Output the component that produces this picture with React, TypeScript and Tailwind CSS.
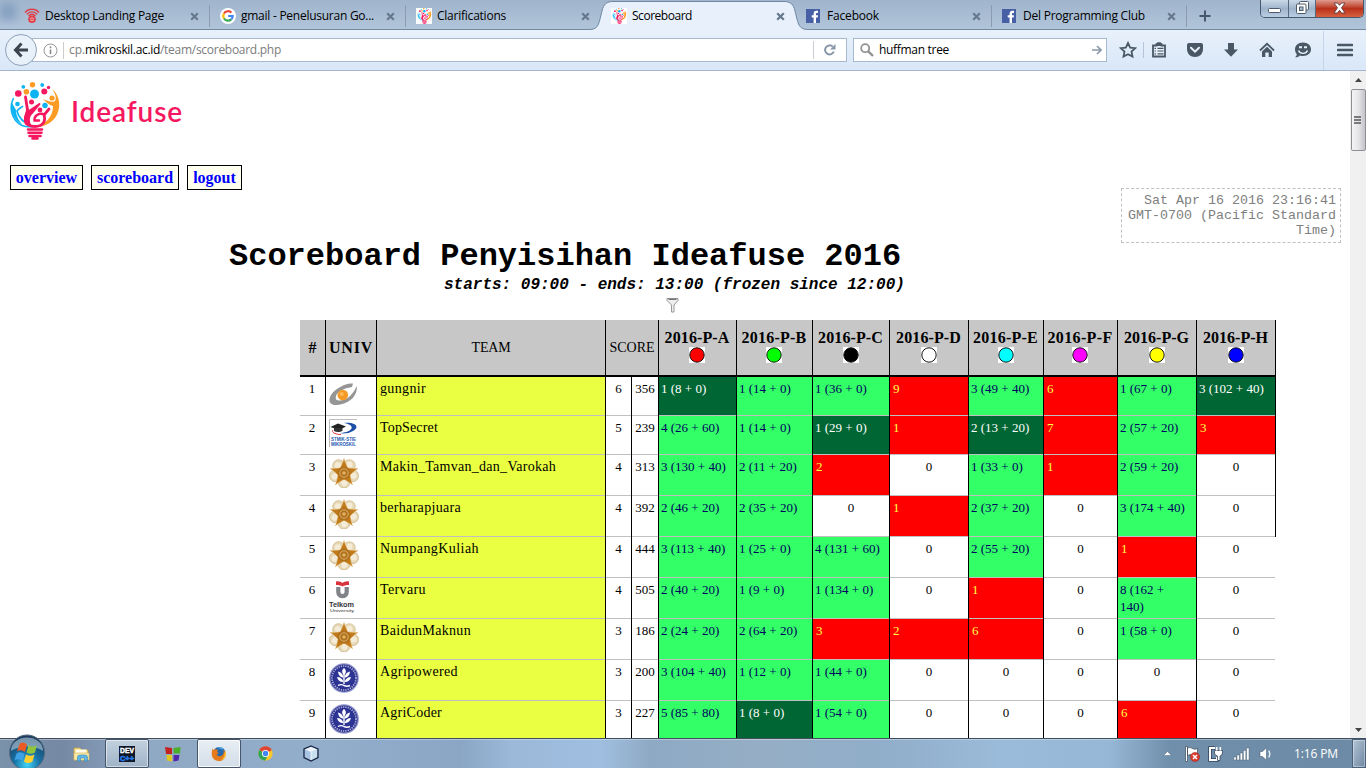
import React, { useLayoutEffect, useRef, useState } from "react";

const UI = "font-['Open_Sans','Noto_Sans',sans-serif]";

/** Spreads the letters of a label over a fixed width. */
function Fit({ w, children, className = "" }: { w: number; children: string; className?: string }) {
  const ref = useRef<HTMLSpanElement>(null);
  const [gap, setGap] = useState(0);
  useLayoutEffect(() => {
    if (ref.current) setGap((w - ref.current.getBoundingClientRect().width) / children.length);
  }, [w, children]);
  return (
    <span ref={ref} className={`inline-block shrink-0 whitespace-pre ${className}`} style={{ letterSpacing: gap }}>
      {children}
    </span>
  );
}

/* ---------- browser tabs ---------- */

const BulbArt = () => (
  <g fill="none">
    <g fill="#f5175f">
      <circle cx="8.300" cy="11.500" r="3.300" />
      <circle cx="34.300" cy="9.500" r="3" />
      <circle cx="38.500" cy="5.500" r="1.700" />
      <circle cx="21.500" cy="20" r="2.500" />
      <circle cx="30" cy="28" r="2.400" />
    </g>
    <g fill="#fb9b23">
      <circle cx="22.500" cy="2.800" r="2.700" />
      <circle cx="16.400" cy="9.800" r="2.800" />
      <circle cx="42" cy="16" r="2.600" />
    </g>
    <g fill="#0eb4f2">
      <circle cx="13.300" cy="4.800" r="1.900" />
      <circle cx="32.200" cy="3" r="1.900" />
      <circle cx="24.500" cy="12" r="4.500" />
      <circle cx="7.500" cy="22" r="2.300" />
      <circle cx="35" cy="23.500" r="2.700" />
    </g>
    <path d="M3.500 16C-1 25 1 38 12 43.500C16 45 20 45 23 44.500C11 40 8 34 7 29C9 26 11 26 13 24" stroke="#0eb4f2" strokeWidth="1.600" />
    <path d="M2 21C0 30 4 38 13 43C8 38 6 33 6 28Z" fill="#0eb4f2" />
    <path d="M42 7C50 13 52 26 45 36C40 42 33 45 26 45C37 41 43 34 43 24C39 23 36 20 33 17C38 19 42 21 45 19C47 16 45 11 42 7Z" fill="#fb9b23" />
    <path d="M15.500 15L17.500 28L15.500 36C14 42 19 44.500 25 44.500C33 44.500 36 39 34 33L39 27" stroke="#f5175f" strokeWidth="2.800" strokeLinecap="round" />
    <path d="M17 26L19 29L30 21.500L22 31C18 34 18 40 21 44C15 42 13 37 17 30Z" fill="#f5175f" stroke="#f5175f" strokeWidth="1.800" />
    <path d="M33 32C28 31 24 34 24.500 38.500H29" stroke="#f5175f" strokeWidth="2.400" strokeLinecap="round" />
    <path d="M18 47.500H32M18.500 50.800H31.500M19.500 54H30.500M22.500 56.500H27.500" stroke="#f5175f" strokeWidth="2.600" strokeLinecap="round" />
  </g>
);

const BulbIcon = () => (
  <span className="flex h-4 w-4 items-center justify-center bg-white">
    <svg width="15" height="16" viewBox="-1 0 52 58">
      <BulbArt />
    </svg>
  </span>
);

const WifiIcon = () => (
  <svg width="16" height="16" viewBox="0 0 16 16" fill="none" stroke="#df3f48">
    <path d="M1 4.500C4.500 .2 11.500 .2 15 4.500M2.800 6.300C5.500 3 10.500 3 13.200 6.300M4.600 8C6.500 5.600 9.500 5.600 11.400 8" strokeWidth="1.400" />
    <circle cx="8" cy="11.300" r="3.800" fill="#df3f48" stroke="none" />
    <circle cx="8" cy="11.300" r="1.500" stroke="#f8c9cc" strokeWidth=".8" />
  </svg>
);

const GoogleIcon = () => (
  <svg width="16" height="16" viewBox="0 0 16 16">
    <circle cx="8" cy="8" r="8" fill="#fff" />
    <g fill="none" strokeWidth="2.200">
      <path d="M11.400 4.600A4.700 4.700 0 0 0 4 5.500" stroke="#ea4335" />
      <path d="M4 5.500A4.800 4.800 0 0 0 4 10.500" stroke="#fbbc05" />
      <path d="M4 10.500A4.700 4.700 0 0 0 11.200 11.400" stroke="#34a853" />
      <path d="M11.200 11.400A4.800 4.800 0 0 0 12.700 8H8.200" stroke="#4285f4" />
    </g>
  </svg>
);

const FacebookIcon = () => (
  <svg width="14" height="14" viewBox="0 0 14 14">
    <rect width="14" height="14" fill="#4760a5" />
    <path d="M7.600 14V8.500H5.700V6.300H7.600V4.700C7.600 2.800 8.600 1.800 10.300 1.800H12V4H10.900C10.200 4 10 4.300 10 5V6.300H12L11.700 8.500H10V14Z" fill="#fff" />
  </svg>
);

const CloseX = () => (
  <svg width="9" height="9" viewBox="0 0 9 9">
    <path d="M1.200 1.200L7.800 7.800M7.800 1.200L1.200 7.800" stroke="#66788c" strokeWidth="2.200" />
  </svg>
);

const tabs = [
  { icon: <WifiIcon />, title: "Desktop Landing Page", w: 119, box: "w-[196px]", line: true },
  { icon: <GoogleIcon />, title: "gmail - Penelusuran Go...", w: 133, box: "w-[196px]", line: true },
  { icon: <BulbIcon />, title: "Clarifications", w: 69, box: "w-[195px]", line: false },
  { icon: <BulbIcon />, title: "Scoreboard", w: 60, box: "w-[195px]", line: false, active: true },
  { icon: <FacebookIcon />, title: "Facebook", w: 52, box: "w-[196px]", line: true },
  { icon: <FacebookIcon />, title: "Del Programming Club", w: 122, box: "w-[195px]", line: true },
];

const TabStrip = () => (
  <div className={`relative flex h-[30px] border-b border-[#74899f] bg-gradient-to-b from-[#a0b5cc] to-[#b0c4da] pl-[14px] text-[12px] text-black ${UI}`}>
    <div className="absolute left-0 top-1 h-4 w-4 bg-[#6f8db5] opacity-60 blur-[4px]" />
    {tabs.map((t) => (
      <div key={t.title} className={`relative flex h-[30px] shrink-0 items-center pl-[10px] pr-[11px] pt-[2px] ${t.box}`}>
        {t.active && (
          <svg className="absolute -left-[12px] top-0" width="220" height="30" viewBox="0 0 220 30">
            <path d="M0 30.500V29.500C7 29.500 9 27 11 19L13 11C14.500 4 18 1.500 24 1.500H195C201 1.500 204.500 4 206 11L208 19C210 27 212 29.500 220 29.500V30.500Z" fill="#e8f1fb" />
            <path d="M0 29.500C7 29.500 9 27 11 19L13 11C14.500 4 18 1.500 24 1.500H195C201 1.500 204.500 4 206 11L208 19C210 27 212 29.500 220 29.500" fill="none" stroke="#6f88a2" />
          </svg>
        )}
        <span className="relative flex w-[21px] shrink-0">{t.icon}</span>
        <span className="relative flex flex-1">
          <Fit w={t.w}>{t.title}</Fit>
        </span>
        <span className="relative">
          <CloseX />
        </span>
        {t.line && <span className="absolute right-0 top-[5px] h-[22px] w-px bg-[#8b9cb0]" />}
      </div>
    ))}
    <svg className="ml-[12px] mt-[10px]" width="12" height="12" viewBox="0 0 12 12">
      <path d="M6 .500V11.500M.500 6H11.500" stroke="#44576b" strokeWidth="2" />
    </svg>
    <div className="absolute right-[2px] top-0 flex h-[18px] w-[104px] overflow-hidden rounded-b-[5px] border border-t-0 border-[#46586c]">
      <div className="flex w-[28px] items-center justify-center border-r border-[#56697e] bg-gradient-to-b from-[#cbd9e8] via-[#9fb4cb] to-[#b9cde2]">
        <svg width="13" height="5" viewBox="0 0 13 5" className="mt-[4px]">
          <rect x=".500" y=".500" width="12" height="4" rx="1" fill="#fff" stroke="#4c5a6b" />
        </svg>
      </div>
      <div className="flex w-[27px] items-start justify-center border-r border-[#56697e] bg-gradient-to-b from-[#cbd9e8] via-[#9fb4cb] to-[#b9cde2] pt-px">
        <svg width="13" height="13" viewBox="0 0 13 13">
          <rect x="3.500" y=".500" width="9" height="8.500" rx="1" fill="#fff" stroke="#4c5a6b" />
          <rect x=".500" y="3" width="9.500" height="9.500" rx="1" fill="#fff" stroke="#4c5a6b" />
          <rect x="3.500" y="6" width="3.500" height="3.500" fill="#a9bcd0" stroke="#4c5a6b" />
        </svg>
      </div>
      <div className="flex flex-1 items-start justify-center bg-gradient-to-b from-[#dd9a8c] via-[#b93019] to-[#d6603e] pt-[2px]">
        <svg width="13" height="12" viewBox="0 0 13 12">
          <path d="M1 1H4.500L6.500 3.300L8.500 1H12L8.500 5.800L12 11H8.500L6.500 8.300L4.500 11H1L4.500 5.800Z" fill="#fff" stroke="#5d3b42" strokeWidth=".9" />
        </svg>
      </div>
    </div>
  </div>
);

/* ---------- navigation bar ---------- */

const C = "#4a5866";

const Toolbar = () => (
  <div className={`flex h-[41px] items-center border-b border-[#a3b6cb] bg-gradient-to-b from-[#e8f1fb] to-[#d9e7f8] text-[12px] ${UI}`}>
    <div className="z-10 ml-[5px] flex h-8 w-8 shrink-0 items-center justify-center rounded-full border border-[#8ea2b8] bg-[#e8f0fa]">
      <svg width="16" height="16" viewBox="0 0 16 16" fill="none" stroke="#3b454f" strokeWidth="3">
        <path d="M8.500 1.500L2.500 8L8.500 14.500M3 8H15" />
      </svg>
    </div>
    <div className="-ml-[5px] flex h-6 w-[815px] shrink-0 items-center border border-[#a6b9ce] bg-white">
      <svg className="ml-[10px] shrink-0" width="15" height="15" viewBox="0 0 15 15">
        <circle cx="7.500" cy="7.500" r="6.500" fill="none" stroke="#979797" />
        <path d="M7.500 6.500V11M7.500 3.500V5.200" stroke="#888" strokeWidth="1.600" />
      </svg>
      <span className="ml-[5px] h-[17px] w-px bg-[#ccc]" />
      <span className="ml-[5px] flex text-[#7c7c7c]">
        <Fit w={16}>cp.</Fit>
        <Fit w={75} className="text-black">mikroskil.ac.id</Fit>
        <Fit w={121}>/team/scoreboard.php</Fit>
      </span>
      <span className="ml-auto h-[18px] w-px bg-[#c9ced4]" />
      <svg className="ml-[10px] mr-[10px]" width="12" height="12" viewBox="0 0 12 12">
        <path d="M9.800 7.500A4.500 4.500 0 1 1 8.700 2.600" fill="none" stroke="#8797a8" strokeWidth="2" />
        <path d="M11.500 0V5.500H6Z" fill="#8797a8" />
      </svg>
    </div>
    <div className="ml-[6px] flex h-6 w-[254px] shrink-0 items-center border border-[#a6b9ce] bg-white">
      <svg className="ml-[6px]" width="14" height="14" viewBox="0 0 14 14" fill="none" stroke="#929292">
        <circle cx="5.200" cy="5.200" r="4" strokeWidth="1.800" />
        <path d="M8.300 8.300L13 13" strokeWidth="2.400" />
      </svg>
      <span className="ml-[5px] flex text-black">
        <Fit w={70}>huffman tree</Fit>
      </span>
      <svg className="ml-auto mr-[4px]" width="10" height="10" viewBox="0 0 10 10" fill="none" stroke="#8898aa" strokeWidth="1.600">
        <path d="M0 5H8.500M5 1L9 5L5 9" />
      </svg>
    </div>
    <svg className="ml-[12px] shrink-0" width="18" height="18" viewBox="0 0 18 18">
      <path d="M9 2L11.200 6.600L16.200 7.200L12.500 10.600L13.500 15.600L9 13.200L4.500 15.600L5.500 10.600L1.800 7.200L6.800 6.600Z" fill="none" stroke={C} strokeWidth="1.800" />
    </svg>
    <span className="ml-[6px] h-[16px] w-px bg-[#b5c4d6]" />
    <svg className="ml-[7px] shrink-0" width="16" height="16" viewBox="0 0 16 16">
      <path d="M2 3.500H5.500V2.200H7V1.200H9V2.200H10.500V3.500H14V14.500H2Z" fill="#e6effa" stroke={C} strokeWidth="1.800" />
      <path d="M5 1.500H11V4H5Z" fill={C} />
      <path d="M3.500 6.300H5M6.500 6.300H12.500M3.500 9H5M6.500 9H12.500M3.500 11.800H5M6.500 11.800H12.500" stroke={C} strokeWidth="1.200" />
    </svg>
    <svg className="ml-[19px] shrink-0" width="18" height="16" viewBox="0 0 18 16">
      <path d="M1 3Q1 1 3 1H15Q17 1 17 3V7C17 12 13.500 15 9 15C4.500 15 1 12 1 7Z" fill={C} />
      <path d="M5 5.800L9 9.600L13 5.800" fill="none" stroke="#e6effa" strokeWidth="2" strokeLinecap="round" />
    </svg>
    <svg className="ml-[19px] shrink-0" width="16" height="16" viewBox="0 0 16 16">
      <path d="M5 1H11V7.500H15L8 14.800L1 7.500H5Z" fill={C} />
    </svg>
    <svg className="ml-[20px] shrink-0" width="16" height="16" viewBox="0 0 16 16">
      <path d="M1 8.500L8 1.800L15 8.500" fill="none" stroke={C} strokeWidth="1.800" />
      <path d="M3 9.500L8 4.800L13 9.500V15H9.700V10.500H6.300V15H3Z" fill={C} />
    </svg>
    <svg className="ml-[19px] shrink-0" width="18" height="16" viewBox="0 0 18 16">
      <path d="M9 .500C14 .500 17 3.500 17 7.300C17 11.200 14 14 9 14C8 14 7 13.900 6 13.500C5 14.700 3 15.500 1 15.300C2.300 14.400 2.800 13.300 2.700 12C1.500 10.700 1 9 1 7.300C1 3.500 4 .500 9 .500Z" fill={C} />
      <path d="M4.500 8.500C6 12.300 12 12.300 13.500 8.500" fill="none" stroke="#e6effa" strokeWidth="1.400" />
      <path d="M5 5.300H8M10 5.300H13" stroke="#e6effa" strokeWidth="2" />
    </svg>
    <span className="ml-[11px] h-[39px] w-px bg-[#c5d4e6]" />
    <svg className="ml-[13px] shrink-0" width="16" height="14" viewBox="0 0 16 14">
      <path d="M1 2H15M1 7H15M1 12H15" stroke={C} strokeWidth="2.600" strokeLinecap="round" />
    </svg>
  </div>
);

/* ---------- scoreboard ---------- */

const Gunadarma = () => (
  <svg width="28" height="32" viewBox="0 0 28 32">
    <path d="M24 3.500C15 3 1 11 .500 20C0 27 12 26 20 21C25 18 28 13 28 6C24 13 20 20 11 20.500C6 21 6 17 8 14C11 10 17 8 23 7Z" fill="#959595" />
    <circle cx="13.800" cy="15" r="5.300" fill="#f59b25" />
    <circle cx="12.800" cy="14" r="2" fill="#fbb95a" />
  </svg>
);

const Mikroskil = () => (
  <svg width="28" height="28" viewBox="0 0 28 28">
    <path d="M.500 28V.500H28" fill="none" stroke="#bdbdbd" />
    <path d="M15 4C27 3 31 8 24 12C20 14.500 14 15 10 14C15 14 21 12.500 22.500 9.500C23.500 6.500 20 5 15 4Z" fill="#1c4fa8" />
    <path d="M4 11C2 13 6 15.500 12 15.500" fill="none" stroke="#e0303a" />
    <path d="M1.500 8L9 4.500L17 7.500L10 11Z" fill="#222" />
    <path d="M5 9V12C8 14 12 13 13.500 11.500V9Z" fill="#333" />
    <g fill="#1d58b0" fontFamily="Liberation Sans, sans-serif" fontWeight="bold">
      <text x="2" y="21.500" fontSize="4.500" textLength="25" lengthAdjust="spacingAndGlyphs">STMIK-STIE</text>
      <text x="2" y="27" fontSize="4.500" textLength="25" lengthAdjust="spacingAndGlyphs">MIKROSKIL</text>
    </g>
  </svg>
);

const turns = [0, 72, 144, 216, 288];
const Gajah = () => (
  <svg width="30" height="30" viewBox="0 0 30 30">
    {turns.map((a) => (
      <g key={a} transform={`rotate(${a} 15 15)`}>
        <ellipse cx="20.300" cy="7.500" rx="6" ry="5.800" fill="#e6d8b6" stroke="#c9b17c" strokeWidth=".6" />
        <ellipse cx="20.500" cy="6.800" rx="3" ry="3.200" fill="#f4ecd8" />
      </g>
    ))}
    {turns.map((a) => (
      <path key={a} transform={`rotate(${a} 15 15)`} d="M15 .500L16 4L18.500 9.500L15 13L11.500 9.500L14 4Z" fill="#c07a1b" stroke="#dca94e" strokeWidth=".4" />
    ))}
    <circle cx="15" cy="15" r="6.500" fill="#b0701c" />
    <circle cx="15" cy="15" r="4.200" fill="none" stroke="#dcb06a" />
    <circle cx="15" cy="15" r="1.800" fill="#e0b364" />
  </svg>
);

const Telkom = () => (
  <svg width="30" height="32" viewBox="0 0 30 32">
    <path d="M7 .500C10 0 12 1 13.500 2C15 1 17 0 20 .500V4C17 4 15 4.500 13.500 5.500C12 4.500 10 4 7 4Z" fill="#d9343d" />
    <path d="M9.300 6V11C9.300 16.500 17.700 16.500 17.700 11V6" fill="none" stroke="#808387" strokeWidth="4.200" />
    <text x="0" y="25.500" fontSize="7" fontWeight="bold" textLength="25" lengthAdjust="spacingAndGlyphs" fill="#333" fontFamily="Liberation Sans, sans-serif">Telkom</text>
    <text x="1" y="30.800" fontSize="4" textLength="24" lengthAdjust="spacingAndGlyphs" fill="#333" fontFamily="Liberation Sans, sans-serif">University</text>
  </svg>
);

const Ipb = () => (
  <svg width="30" height="30" viewBox="0 0 30 30">
    <circle cx="15" cy="15" r="14.800" fill="#8e93c8" />
    <circle cx="15" cy="15" r="13.600" fill="#2a2f8d" />
    <circle cx="15" cy="15" r="12" fill="none" stroke="#a9aed8" strokeWidth="1.700" strokeDasharray="1.300 1" />
    <circle cx="15" cy="15" r="10.200" fill="#2e3494" />
    <path d="M15 8V21" stroke="#fff" strokeWidth="1.400" />
    <g fill="#fff">
      <path d="M15 5C17.500 7 17.500 10 15 12C12.500 10 12.500 7 15 5Z" />
      <path d="M9 8.500C12 9 14 11 14.500 14.500C11 14.500 9.500 12 9 8.500ZM21 8.500C18 9 16 11 15.500 14.500C19 14.500 20.500 12 21 8.500Z" />
      <path d="M8 14C11 14 13.500 15.500 14.500 19C11 19.200 9 17.500 8 14ZM22 14C19 14 16.500 15.500 15.500 19C19 19.200 21 17.500 22 14Z" />
    </g>
    <path d="M9 22.500Q12 20.800 15 22.500Q18 24 21 22.500" fill="none" stroke="#fff" strokeWidth="1.400" />
  </svg>
);

const cols = "grid grid-cols-[26px_51px_229px_26px_27px_78px_76px_77px_79px_75px_74px_79px_79px]";

const problems = [
  ["A", "#ff0000"],
  ["B", "#00ff00"],
  ["C", "#000000"],
  ["D", "#ffffff"],
  ["E", "#00ffff"],
  ["F", "#ff00ff"],
  ["G", "#ffff00"],
  ["H", "#0000ff"],
];

/* a trailing "*" marks the first solver; a bare number is a failed attempt */
const rows = [
  { logo: <Gunadarma />, team: "gungnir", tw: 46, n: 6, p: 356, h: "h-[39px]", c: ["1 (8 + 0)*", "1 (14 + 0)", "1 (36 + 0)", "9", "3 (49 + 40)", "6", "1 (67 + 0)", "3 (102 + 40)*"] },
  { logo: <Mikroskil />, team: "TopSecret", tw: 58, n: 5, p: 239, h: "h-[39px]", c: ["4 (26 + 60)", "1 (14 + 0)", "1 (29 + 0)*", "1", "2 (13 + 20)*", "7", "2 (57 + 20)", "3"] },
  { logo: <Gajah />, team: "Makin_Tamvan_dan_Varokah", tw: 176, n: 4, p: 313, h: "h-[41px]", c: ["3 (130 + 40)", "2 (11 + 20)", "2", "0", "1 (33 + 0)", "1", "2 (59 + 20)", "0"] },
  { logo: <Gajah />, team: "berharapjuara", tw: 81, n: 4, p: 392, h: "h-[41px]", c: ["2 (46 + 20)", "2 (35 + 20)", "0", "1", "2 (37 + 20)", "0", "3 (174 + 40)", "0"] },
  { logo: <Gajah />, team: "NumpangKuliah", tw: 99, n: 4, p: 444, h: "h-[41px]", c: ["3 (113 + 40)", "1 (25 + 0)", "4 (131 + 60)", "0", "2 (55 + 20)", "0", "1", "0"] },
  { logo: <Telkom />, team: "Tervaru", tw: 46, n: 4, p: 505, h: "h-[41px]", c: ["2 (40 + 20)", "1 (9 + 0)", "1 (134 + 0)", "0", "1", "0", "8 (162 +\n140)", "0"] },
  { logo: <Gajah />, team: "BaidunMaknun", tw: 91, n: 3, p: 186, h: "h-[41px]", c: ["2 (24 + 20)", "2 (64 + 20)", "3", "2", "6", "0", "1 (58 + 0)", "0"] },
  { logo: <Ipb />, team: "Agripowered", tw: 78, n: 3, p: 200, h: "h-[41px]", c: ["3 (104 + 40)", "1 (12 + 0)", "1 (44 + 0)", "0", "0", "0", "0", "0"] },
  { logo: <Ipb />, team: "AgriCoder", tw: 62, n: 3, p: 227, h: "h-[41px]", c: ["5 (85 + 80)", "1 (8 + 0)*", "1 (54 + 0)", "0", "0", "0", "6", "0"] },
];

function tone(v: string) {
  if (v === "0") return "bg-white text-black text-center";
  if (v.endsWith("*")) return "bg-[#006633] text-white pl-[2px]";
  if (v.includes("(")) return "bg-[#33ff66] text-[#000060] pl-[2px]";
  return "bg-[#ff0000] text-[#ffff44] pl-[3px]";
}

/** Table cell: the grey rule closes the bottom, the black one the right side. */
const Cell = ({ className, children, edge = true }: { className: string; children: React.ReactNode; edge?: boolean }) => (
  <div className={`flex ${edge ? "border-r border-black" : "pr-px"}`}>
    <div className={`min-w-0 flex-1 whitespace-pre-line border-b border-[#c0c0c0] ${className}`}>{children}</div>
  </div>
);

const Scoreboard = () => (
  <div className="ml-[300px] w-[976px] shrink-0 font-['Liberation_Serif',serif] text-[13px] leading-[17px] text-black">
    <div className={`${cols} h-[57px] border-b-2 border-black bg-[#c7c7c7] text-[16px] font-bold`}>
      <div className="flex items-center justify-center border-r border-black">#</div>
      <div className="flex items-center justify-center border-r border-black">
        <Fit w={44}>UNIV</Fit>
      </div>
      <div className="flex items-center justify-center border-r border-black text-[14px] font-normal">
        <Fit w={39}>TEAM</Fit>
      </div>
      <div className="col-span-2 flex items-center justify-center border-r border-black text-[14px] font-normal">
        <Fit w={45}>SCORE</Fit>
      </div>
      {problems.map(([l, fill]) => (
        <div key={l} className="flex flex-col items-center border-r border-black pt-[9px] pr-px">
          <span className="whitespace-nowrap leading-[18px]">
            <Fit w={65}>{`2016-P-${l}`}</Fit>
          </span>
          <svg width="16" height="16" viewBox="0 0 16 16">
            <rect width="16" height="16" fill="#fff" />
            <circle cx="8" cy="8" r="7.200" fill={fill} stroke="#111" />
          </svg>
        </div>
      ))}
    </div>
    {rows.map((r, i) => (
      <div key={r.team} className={`${cols} ${r.h}`}>
        <Cell className="pr-px pt-[3px] text-center">{i + 1}</Cell>
        <Cell className="pl-[3px] pt-[3px]">{r.logo}</Cell>
        <Cell className="bg-[#ebff42] pl-[3px] pt-[3px] text-[14px]">
          <Fit w={r.tw}>{r.team}</Fit>
        </Cell>
        <Cell className="pt-[3px] text-center">{r.n}</Cell>
        <Cell className="pt-[3px] text-center">{r.p}</Cell>
        {r.c.map((v, j) => (
          <Cell key={j} className={`pt-[3px] ${tone(v)}`} edge={j < 7 || i < 4}>
            {v.replace("*", "")}
          </Cell>
        ))}
      </div>
    ))}
  </div>
);

const Page = () => (
  <div className="flex min-w-0 flex-1 flex-col overflow-hidden bg-white">
    <div className="flex h-[94px] shrink-0 pl-[10px] pt-[11px]">
      <svg width="52" height="59" viewBox="0 0 52 59">
        <BulbArt />
      </svg>
      <div className="ml-[9px] mt-[11px] font-['Lato','Open_Sans',sans-serif] text-[28px] font-semibold leading-[36px] text-[#f5175f]">
        <Fit w={112}>Ideafuse</Fit>
      </div>
    </div>
    <nav className="flex shrink-0 gap-2 pl-[10px] font-['Liberation_Serif',serif] text-[16px] font-bold leading-[23px] text-[#0000ff]">
      <a className="w-[73px] border border-black bg-[#fffff0] text-center">overview</a>
      <a className="w-[88px] border border-black bg-[#fffff0] text-center">scoreboard</a>
      <a className="w-[55px] border border-black bg-[#fffff0] text-center">logout</a>
    </nav>
    <div className="-mt-[2px] mr-[9px] h-[55px] w-[220px] shrink-0 self-end border border-dashed border-[#c0c0c0] pr-[4px] pt-[4px] text-right font-['Liberation_Mono',monospace] text-[13.333px] leading-[15px] text-[#808080]">
      Sat Apr 16 2016 23:16:41
      <br />
      GMT-0700 (Pacific Standard
      <br />
      Time)
    </div>
    <h1 className="-mt-[4px] ml-[229px] shrink-0 whitespace-nowrap font-['Liberation_Mono',monospace] text-[32px] font-bold leading-[36px] text-black">
      Scoreboard Penyisihan Ideafuse 2016
    </h1>
    <div className="ml-[444px] shrink-0 whitespace-nowrap pt-px font-['Liberation_Mono',monospace] text-[16px] font-bold italic leading-[18px] text-black">
      starts: 09:00 - ends: 13:00 (frozen since 12:00)
    </div>
    <svg className="mb-[7px] ml-[666px] mt-[3px] shrink-0" width="13" height="16" viewBox="0 0 13 16">
      <path d="M1 1.500H12V3.500L8 8V15H5.500V8L1 3.500Z" fill="#eee" stroke="#999" />
      <path d="M2.500 2.300H10.500" stroke="#555" />
    </svg>
    <Scoreboard />
  </div>
);

const Scrollbar = () => (
  <div className="flex w-4 shrink-0 flex-col items-center bg-[#f0f0f0]">
    <svg className="mt-[7px]" width="7" height="4" viewBox="0 0 7 4">
      <path d="M0 4L3.500 0L7 4Z" fill="#444" />
    </svg>
    <div className="mt-[7px] flex h-[62px] w-[15px] items-center justify-center rounded-[2px] border border-[#8f8f93] bg-gradient-to-r from-[#f5f5f6] via-[#e5e5e8] to-[#c3c3c9]">
      <svg width="8" height="8" viewBox="0 0 8 8">
        <path d="M0 1H7M0 4H7M0 7H7" stroke="#55555b" strokeWidth="1.300" />
      </svg>
    </div>
    <svg className="mb-[6px] mt-auto" width="7" height="4" viewBox="0 0 7 4">
      <path d="M0 0L3.500 4L7 0Z" fill="#444" />
    </svg>
  </div>
);

/* ---------- taskbar ---------- */

const Orb = () => (
  <svg className="relative -top-[5px] left-0" width="38" height="38" viewBox="0 0 38 38">
    <defs>
      <radialGradient id="orb" cx=".5" cy=".85" r=".8">
        <stop offset="0" stopColor="#43d3f6" />
        <stop offset=".45" stopColor="#1673a8" />
        <stop offset="1" stopColor="#1b3c5c" />
      </radialGradient>
    </defs>
    <circle cx="19" cy="18.500" r="17.500" fill="url(#orb)" stroke="#54697d" />
    <path d="M3 17C3 -1 35 -1 35 17C26 11 12 11 3 17Z" fill="#cbd9e5" opacity=".55" />
    <path d="M11.500 10Q15 7 19 10.500L17 18Q13 15 9 17.500Z" fill="#ec5a24" />
    <path d="M20.500 11Q25 14 29 11L27 18.500Q23 21 18.500 18.500Z" fill="#8fc43d" />
    <path d="M8.500 19.500Q13 17 16.500 20L14.500 27Q11 24 6.500 26.500Z" fill="#3fa1e6" />
    <path d="M18 20.500Q22 23 26.500 20.500L24.500 27.500Q20 30.500 16 27.500Z" fill="#fdd032" />
  </svg>
);

const Explorer = () => (
  <svg width="17" height="16" viewBox="0 0 17 16">
    <path d="M1 2H7L8.500 4H15V14H1Z" fill="#f2d878" stroke="#c8a545" strokeWidth=".7" />
    <rect x="2.500" y="3.500" width="11" height="4" fill="#fffbe8" />
    <path d="M1 7H16V14H1Z" fill="#faeaa5" stroke="#d1b25a" strokeWidth=".6" />
    <path d="M4.500 15V11Q4.500 9 7 9H12Q14.500 9 14.500 11V15H11.500V12H7.500V15Z" fill="#5fb7e5" stroke="#388bbc" strokeWidth=".6" />
  </svg>
);

const DevCpp = () => (
  <svg width="16" height="16" viewBox="0 0 16 16">
    <rect width="16" height="16" fill="#0e1726" />
    <text x="1" y="7" fontSize="7" fontWeight="bold" fill="#fff" stroke="#fff" strokeWidth=".4" textLength="14" lengthAdjust="spacingAndGlyphs" fontFamily="Liberation Sans, sans-serif">DEV</text>
    <text x="1" y="14.800" fontSize="8" fontWeight="bold" fill="#287bea" stroke="#287bea" strokeWidth=".6" textLength="14" lengthAdjust="spacingAndGlyphs" fontFamily="Liberation Sans, sans-serif">C++</text>
  </svg>
);

const Blocks = () => (
  <svg width="16" height="16" viewBox="0 0 16 16">
    <path d="M0 1L7 2V8H1Z" fill="#c42222" />
    <path d="M8.500 2L15.500 1L15 7.500H8.500Z" fill="#4aae29" />
    <path d="M1.500 9H7V15.500L2 14.500Z" fill="#e0c821" />
    <path d="M8.500 9H14.500L13.500 14.500L8.500 15.500Z" fill="#5126aa" />
  </svg>
);

const Firefox = () => (
  <svg width="16" height="16" viewBox="0 0 16 16">
    <circle cx="8.200" cy="7.500" r="6.500" fill="#2769ad" />
    <path d="M6 2Q10 -.500 13 3Q10 4 9 2.500Z" fill="#53a8dc" />
    <path d="M2 1.500Q1.500 3 2 4Q4 2.500 7 4L6 6Q8 6.500 7.500 7.500L5.500 8.500Q6.500 11 10 10Q13.500 8.500 12.500 4Q15 5.500 14.700 9C14 13 11 15.500 7.500 15C3 14.500 .500 11.500 .700 7Q.800 3.500 2 1.500Z" fill="#e57b1d" />
    <path d="M14.700 5Q16.500 12 10 14.500Q14 11 13.500 7Z" fill="#fbc236" />
  </svg>
);

const Chrome = () => (
  <svg width="15" height="15" viewBox="0 0 16 16">
    <circle cx="8" cy="8" r="7.600" fill="#fbc72b" />
    <path d="M8 8L1.400 4.200A7.600 7.600 0 0 1 14.600 4.200Z" fill="#df4437" />
    <path d="M1.400 4.200A7.600 7.600 0 0 0 7.600 15.600L10.500 10Z" fill="#32a35a" />
    <path d="M14.600 4.200H8V8Z" fill="#df4437" />
    <circle cx="8" cy="8" r="3.800" fill="#fff" />
    <circle cx="8" cy="8" r="2.900" fill="#4285f4" />
  </svg>
);

const Cube = () => (
  <svg width="16" height="17" viewBox="0 0 16 17">
    <path d="M8 1L15 4V12.500L8 16L1 12.500V4Z" fill="#a8c4e4" stroke="#1c2743" strokeWidth="1.300" />
    <path d="M8 2L14 4.500L8 7L2 4.500Z" fill="#eef5fc" />
    <path d="M8 7L14 4.500V12L8 15Z" fill="#c8dff0" />
    <path d="M8 7V15" stroke="#fff" strokeWidth=".7" />
  </svg>
);

const apps = [
  { k: "explorer", icon: <Explorer />, box: "border-transparent" },
  { k: "dev", icon: <DevCpp />, box: "border-[#45566a] bg-gradient-to-b from-[#c3d1de] to-[#9fb3c8] shadow-[inset_0_0_0_1px_rgba(255,255,255,0.5)]" },
  { k: "blocks", icon: <Blocks />, box: "border-transparent" },
  { k: "firefox", icon: <Firefox />, box: "border-[#45566a] bg-gradient-to-b from-[#e8eef4] to-[#d3dee9] shadow-[inset_0_0_0_1px_rgba(255,255,255,0.8)]" },
  { k: "chrome", icon: <Chrome />, box: "border-transparent" },
  { k: "cube", icon: <Cube />, box: "border-transparent" },
];

const Taskbar = () => (
  <div className="relative flex h-[30px] shrink-0 items-start border-t border-[#3f4d5c] bg-[linear-gradient(90deg,#7b92ab_0px,#7588a4_60px,#8fa8c3_150px,#92aecb_320px,#8ba6c5_460px,#9bb8d8_510px,#a0bfe0_600px,#8ea9c4_650px,#95aec5_760px,#90adc9_880px,#9abbd9_1000px,#96b7d5_1110px,#708fab_1170px,#6c8aa6_1366px)] shadow-[inset_0_1px_0_rgba(255,255,255,0.35)]">
    <div className="ml-[8px] w-[51px]">
      <Orb />
    </div>
    <div className="flex gap-[2px]">
      {apps.map((a) => (
        <div key={a.k} className={`flex h-[29px] w-[44px] items-center justify-center rounded-[2px] border ${a.box}`}>
          {a.icon}
        </div>
      ))}
    </div>
    <div className={`ml-auto flex h-[29px] items-center text-[12px] text-white ${UI}`}>
      <svg width="9" height="5" viewBox="0 0 9 5">
        <path d="M.500 4.500L4.500 .500L8.500 4.500Z" fill="#fff" stroke="#55697e" strokeWidth=".5" />
      </svg>
      <svg className="ml-[12px]" width="16" height="16" viewBox="0 0 16 16">
        <path d="M1.500 .500H3.500V15.500H1.500ZM3.500 2Q6 .500 8.500 2.500Q11 4 13.500 2.500V9.500Q11 11 8.500 9Q6 8 3.500 9.500Z" fill="#fff" stroke="#394a5c" strokeWidth=".7" />
        <circle cx="11" cy="11" r="4.600" fill="#d93a2e" stroke="#9f241c" strokeWidth=".5" />
        <path d="M9 9L13 13M13 9L9 13" stroke="#fff" strokeWidth="1.500" />
      </svg>
      <svg className="ml-[8px]" width="16" height="16" viewBox="0 0 16 16">
        <path d="M7 2H2V14H9V12" fill="none" stroke="#34465a" strokeWidth="3.600" />
        <path d="M7 2H2V14H9V11" fill="none" stroke="#fff" strokeWidth="2" />
        <path d="M6.500 4.500H14.500V7Q14.500 9.500 12 10V14.500H9.500V10Q6.500 9.500 6.500 7Z" fill="#fff" stroke="#34465a" strokeWidth=".8" />
        <path d="M8.700 1V4.500M12.300 1V4.500" stroke="#fff" strokeWidth="1.600" />
      </svg>
      <svg className="ml-[9px]" width="17" height="14" viewBox="0 0 17 14">
        <path d="M.800 10H3.200V13H.800ZM4 8H6.400V13H4ZM7.200 6H9.600V13H7.200ZM10.400 3.500H12.800V13H10.400ZM13.600 1H16V13H13.600Z" fill="#fff" stroke="#3f5266" strokeWidth=".4" />
      </svg>
      <svg className="ml-[9px]" width="14" height="14" viewBox="0 0 14 14">
        <path d="M1 4.500H3.500L7.500 .800V13.200L3.500 9.500H1Z" fill="#fff" stroke="#3f5266" strokeWidth=".5" />
        <path d="M9.800 3.500Q11.800 7 9.800 10.500" fill="none" stroke="#e6edf4" strokeWidth="1.400" />
      </svg>
      <span className="ml-[21px] flex w-[58px]">
        <Fit w={44}>1:16 PM</Fit>
      </span>
      <span className="h-[29px] w-[14px] border border-[#49617a] bg-gradient-to-br from-[#b5c5d5] to-[#6e88a2] shadow-[inset_0_0_0_1px_rgba(255,255,255,0.35)]" />
    </div>
  </div>
);

export default function App() {
  return (
    <div className="flex h-[768px] w-[1366px] flex-col overflow-hidden bg-white">
      <TabStrip />
      <Toolbar />
      <div className="flex min-h-0 flex-1 overflow-hidden">
        <Page />
        <Scrollbar />
      </div>
      <Taskbar />
    </div>
  );
}
